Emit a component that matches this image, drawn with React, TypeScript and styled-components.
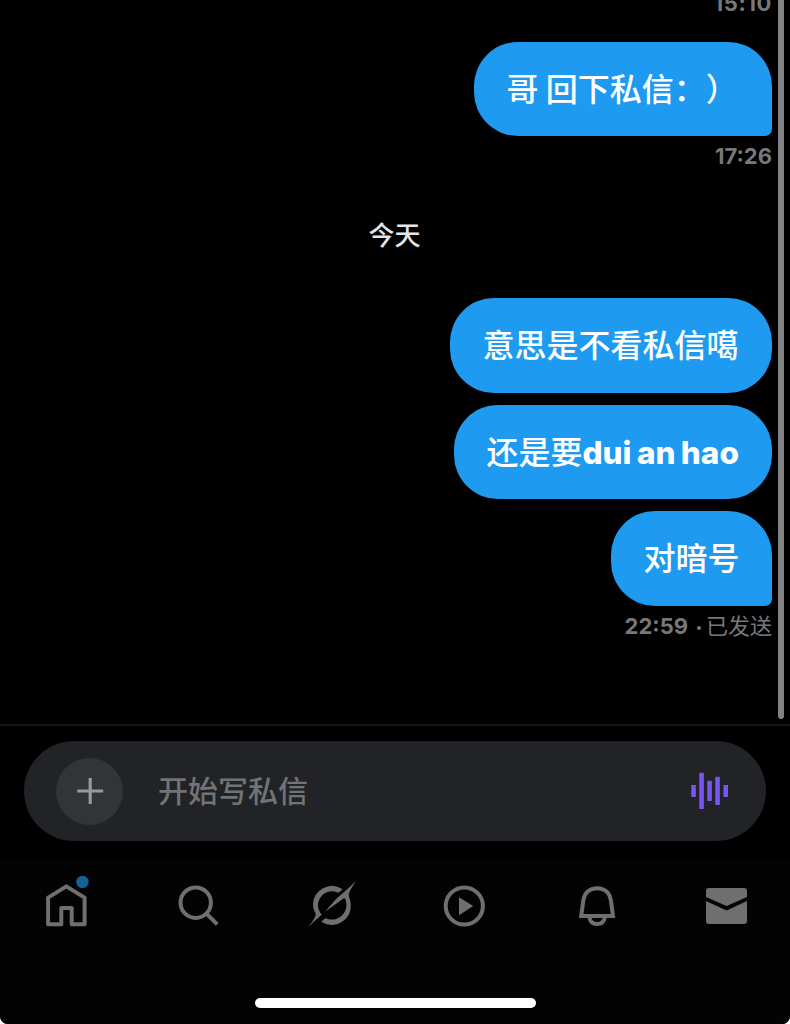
import React from 'react';
import styled, { createGlobalStyle } from 'styled-components';

const GlobalStyle = createGlobalStyle`
  * { box-sizing: border-box; }
  body { margin: 0; background: #fff; }
`;

const Screen = styled.main`
  position: relative;
  display: flex;
  flex-direction: column;
  width: 790px;
  height: 1024px;
  overflow: hidden;
  background: #000;
  border-radius: 0 0 8px 8px;
  font-family: Inter, 'Noto Sans CJK SC', sans-serif;
`;

const Conversation = styled.section`
  display: flex;
  flex-direction: column;
  align-items: flex-end;
  flex: none;
  height: 724px;
  padding-right: 18px;
  overflow: hidden;
`;

const Bubble = styled.div<{ $width: number; $last?: boolean }>`
  flex: none;
  width: ${(p) => p.$width}px;
  height: 94.5px;
  padding-left: 32.5px;
  border-radius: ${(p) => (p.$last ? '44px 44px 7px 44px' : '44px')};
  background: #1e9bf1;
  color: #fff;
  font-family: 'Noto Sans CJK SC', sans-serif;
  font-size: 32px;
  font-weight: 500;
  line-height: 90px;
  white-space: nowrap;
  text-spacing-trim: space-all;
  font-feature-settings: 'chws' 0, 'halt' 0;
`;

const Stack = styled.div<{ $top: number }>`
  display: flex;
  flex-direction: column;
  align-items: flex-end;
  gap: 12.1px;
  margin-top: ${(p) => p.$top}px;
`;

const Latin = styled.span`
  font-family: Inter, sans-serif;
  font-size: 31.5px;
  font-weight: 800;
  letter-spacing: 0;
  word-spacing: -1.5px;
`;

const Time = styled.div<{ $top: number; $spacing?: number }>`
  display: flex;
  align-items: center;
  flex: none;
  height: 28px;
  margin-top: ${(p) => p.$top}px;
  color: #77787b;
  font-size: 22px;
  font-weight: 700;
  letter-spacing: ${(p) => p.$spacing ?? 0}px;
  line-height: 28px;
  white-space: nowrap;
`;

const Dot = styled.span`
  width: 4px;
  height: 4px;
  margin: 4px 5px 0 9px;
  border-radius: 50%;
  background: #77787b;
`;

const Status = styled.span`
  height: 32px;
  font-family: 'Noto Sans CJK SC', sans-serif;
  font-weight: 400;
  letter-spacing: 0;
`;

const Day = styled.div`
  align-self: center;
  height: 38px;
  margin: 45px 0 0 17px;
  color: #e4e5e6;
  font-family: 'Noto Sans CJK SC', sans-serif;
  font-size: 26px;
  font-weight: 500;
  line-height: 38px;
`;

const Scrollbar = styled.div`
  position: absolute;
  top: -10px;
  right: 6px;
  width: 6px;
  height: 729px;
  border-radius: 3px;
  background: #828282;
`;

const Composer = styled.section`
  flex: none;
  height: 134px;
  padding: 15px 24px 0;
  border-top: 2px solid #151617;
`;

const Field = styled.div`
  display: flex;
  align-items: center;
  height: 100px;
  padding: 0 38px 0 32px;
  border-radius: 50px;
  background: #212327;
`;

const AddButton = styled.button`
  display: flex;
  align-items: center;
  justify-content: center;
  width: 67px;
  height: 67px;
  padding: 0;
  border: 0;
  border-radius: 50%;
  background: #313538;
`;

const Placeholder = styled.span`
  flex: 1;
  margin-left: 35px;
  padding-bottom: 4px;
  color: #717377;
  font-family: 'Noto Sans CJK SC', sans-serif;
  font-size: 30px;
  font-weight: 500;
  line-height: 44px;
`;

const TabBar = styled.nav`
  display: flex;
  justify-content: space-between;
  flex: 1;
  padding: 17px 34px 0 36px;
  background: #030303;
`;

const TabIcon = styled.svg`
  width: 60px;
  height: 60px;
  overflow: visible;
  fill: none;
  stroke: #6f6f6f;
  stroke-width: 4;
`;

const HomeIndicator = styled.div`
  position: absolute;
  left: 254.5px;
  bottom: 16px;
  width: 281.5px;
  height: 10px;
  border-radius: 5px;
  background: #fff;
`;

export default function App() {
  return (
    <>
      <GlobalStyle />
      <Screen>
        <Conversation>
          <Time $top={-11} $spacing={0.6}>15:10</Time>
          <Stack $top={24.5}>
            <Bubble $width={298} $last>哥 回下私信：）</Bubble>
          </Stack>
          <Time $top={6}>17:26</Time>
          <Day>今天</Day>
          <Stack $top={45}>
            <Bubble $width={322}>意思是不看私信噶</Bubble>
            <Bubble $width={318}>
              还是要<Latin>dui an hao</Latin>
            </Bubble>
            <Bubble $width={161} $last>对暗号</Bubble>
          </Stack>
          <Time $top={6}>
            22:59
            <Dot />
            <Status>已发送</Status>
          </Time>
        </Conversation>
        <Scrollbar />
        <Composer>
          <Field>
            <AddButton aria-label="添加">
              <svg width="28" height="28" stroke="#98999c" strokeWidth="3.2">
                <path d="M14.2 1v26M1.2 14h26" />
              </svg>
            </AddButton>
            <Placeholder>开始写私信</Placeholder>
            <svg width="37" height="38" fill="#7856f5">
              <rect x="0.3" y="13" width="4.5" height="12" />
              <rect x="8.3" y="0.8" width="4.5" height="36.2" />
              <rect x="16.3" y="8.8" width="4.5" height="20.2" />
              <rect x="24.3" y="4.8" width="4.5" height="28.2" />
              <rect x="32.5" y="13" width="4.5" height="12" />
            </svg>
          </Field>
        </Composer>
        <TabBar>
          <TabIcon viewBox="0 0 60 60">
            <path strokeLinejoin="round" d="M12.1 22.6 30.3 11.4 48.6 22.6V49.2H35.7V33H25.3V49.2H12.1Z" />
            <circle cx="46.4" cy="7" r="6.2" fill="#176199" stroke="none" />
          </TabIcon>
          <TabIcon viewBox="0 0 60 60">
            <circle cx="27.7" cy="27.7" r="15.2" />
            <path d="M38 38.2 49.2 49.3" />
          </TabIcon>
          <TabIcon viewBox="0 0 60 60">
            <g fill="#6f6f6f" stroke="none">
              <path d="M42.7 14.3A19 19 0 0 0 13 30.3C13 34 15 36.5 15.7 39C16.2 42 11 48.5 6.7 54C12 48 18 43 21.7 39.8C19.5 37 17.9 34 17.9 30.3A14.2 14.2 0 0 1 38.5 17.7Z" />
              <path d="M56 6 47 14.5 36.5 23.5 25 36.7 43.5 23.6C45 22.6 45.6 24 45.9 26.2C48.5 36 41 44.5 32 44.5C29.5 44.5 27.5 44 25.5 43L21.3 46.7A19 19 0 0 0 50.8 30.3C50.8 26 49 22.5 48.8 20C48.6 17 52 12 56 6Z" />
            </g>
          </TabIcon>
          <TabIcon viewBox="0 0 60 60">
            <circle cx="32.3" cy="31" r="18.6" />
            <path d="M27 22.3 41.2 31 27 40.3Z" fill="#6f6f6f" stroke="none" />
          </TabIcon>
          <TabIcon viewBox="0 0 60 60">
            <path d="M17.2 41 19.3 25.6C20.3 18 25.5 13.2 33.1 13.2S46 18 46.9 25.6L49 41Z" />
            <path d="M25.3 42C26 46.5 29 49.1 33.1 49.1S40.2 46.5 40.9 42" />
          </TabIcon>
          <TabIcon viewBox="0 0 60 60">
            <path
              fill="#6f6f6f"
              stroke="none"
              d="M13 13H48Q51 13 51 16V22L30.6 30.9 10 22V16Q10 13 13 13ZM10 26 30.6 35.4 51 26V46Q51 49 48 49H13Q10 49 10 46Z"
            />
          </TabIcon>
        </TabBar>
        <HomeIndicator />
      </Screen>
    </>
  );
}
